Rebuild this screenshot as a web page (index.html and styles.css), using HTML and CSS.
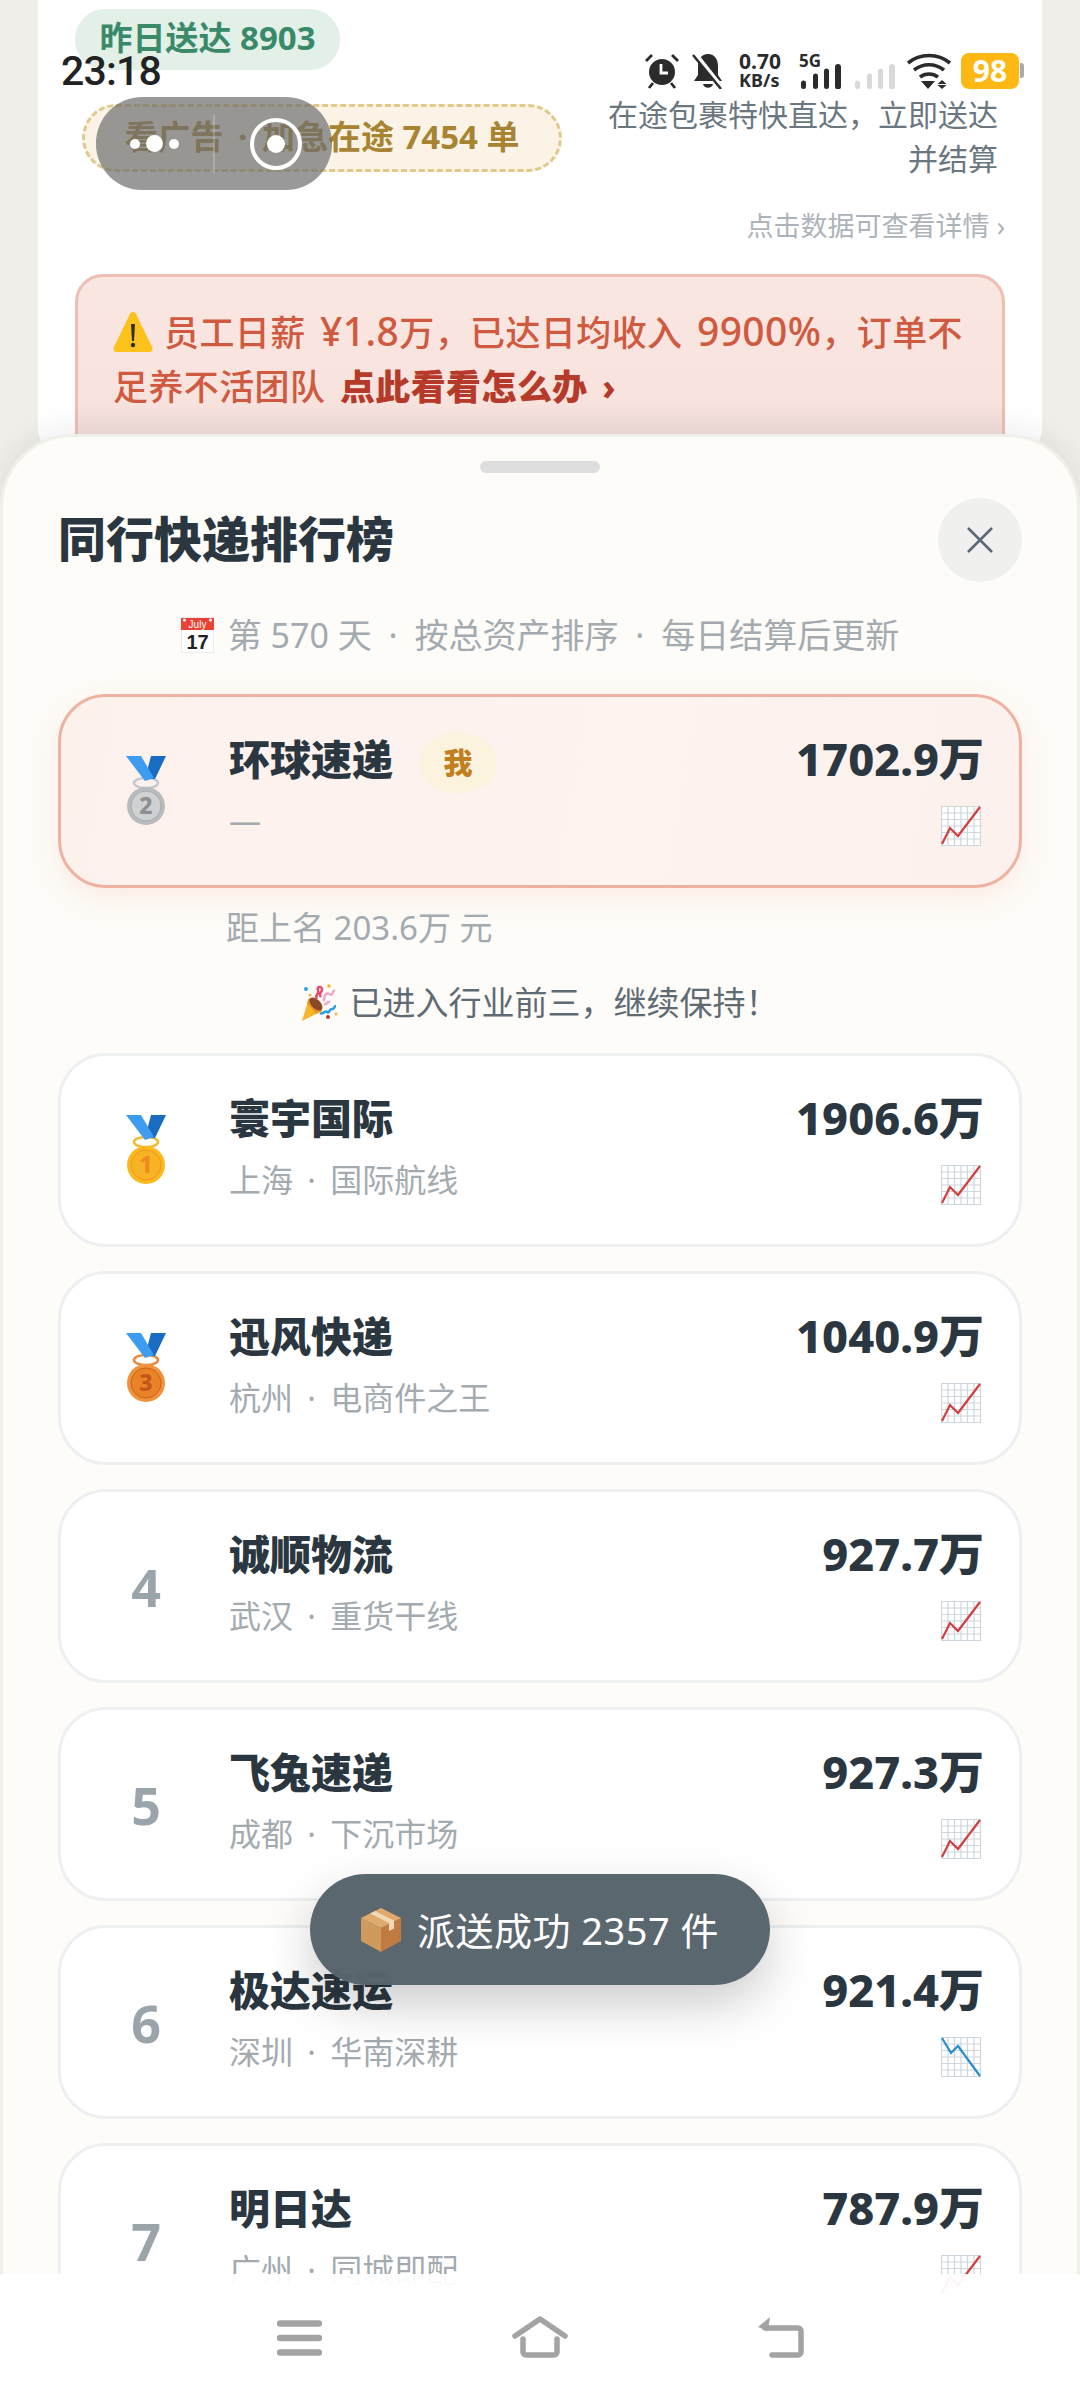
FILE: index.html
```html
<!DOCTYPE html>
<html lang="zh-CN">
  <head>
    <meta charset="UTF-8" />
    <title>同行快递排行榜</title>
    <link rel="stylesheet" href="styles.css">
  </head>
  <body>
    <svg class="defs" xmlns="http://www.w3.org/2000/svg">
      <symbol id="ribbon" viewBox="0 0 40 70">
        <path d="M25 0h15L29 23H19z" fill="#1a6cc0" />
        <path d="M0 0h15l13 22-9 3z" fill="#3d9bf0" />
      </symbol>
      <symbol id="chart-up" viewBox="0 0 40 40">
        <rect width="40" height="40" fill="#fff" />
        <path d="M.5 0v40M7 0v40M13.5 0v40M20 0v40M26.500 0v40M33 0v40M39.500 0v40M0 .5h40M0 7h40M0 13.500h40M0 20h40M0 26.500h40M0 33h40M0 39.500h40" stroke="#cdd6dc" stroke-width="1.200" fill="none" />
        <path d="M1 38l8-16 8 8L39 1" stroke="#d0403f" stroke-width="2.200" fill="none" />
      </symbol>
      <symbol id="chart-down" viewBox="0 0 40 40">
        <rect width="40" height="40" fill="#fff" />
        <path d="M.5 0v40M7 0v40M13.5 0v40M20 0v40M26.500 0v40M33 0v40M39.500 0v40M0 .5h40M0 7h40M0 13.500h40M0 20h40M0 26.500h40M0 33h40M0 39.500h40" stroke="#cdd6dc" stroke-width="1.200" fill="none" />
        <path d="M1 1l9 15 7-7 22 30" stroke="#2a8fc8" stroke-width="2.200" fill="none" />
      </symbol>
    </svg>

    <!-- page behind the sheet -->
    <div class="stats-card">
      <div class="yesterday">昨日送达 8903</div>
      <div class="stats-row">
        <div class="ad-pill">看广告 <span class="sep">·</span> 加急在途 7454 单</div>
        <div class="stats-note">在途包裹特快直达，立即送达<br />并结算</div>
      </div>
      <div class="stats-hint">点击数据可查看详情 ›</div>
      <div class="warn-banner">
        <svg class="warn-icon" viewBox="0 0 40 42">
          <path d="M20 1c2 0 3 1 4 4l15 31c1 3 0 5-3 5H4c-3 0-4-2-3-5L16 5c1-3 2-4 4-4z" fill="#fcc21b" />
          <path d="M18 13h4l-1 17h-2z" fill="#2f2f2f" />
          <circle cx="20" cy="34" r="2.200" fill="#2f2f2f" />
        </svg>员工日薪 <span class="num">¥1.8</span>万，已达日均收入 <span class="num">9900%</span>，订单不足养不活团队 <b>点此看看怎么办 ›</b>
      </div>
    </div>

    <!-- ranking sheet -->
    <section class="sheet">
      <div class="handle"></div>
      <div class="sheet-head">
        <h1>同行快递排行榜</h1>
        <div class="close">
          <svg viewBox="0 0 28 28" width="28" height="28">
            <path d="M2 2l24 24M26 2L2 26" stroke="#5a6873" stroke-width="2.500" fill="none" />
          </svg>
        </div>
      </div>
      <div class="sheet-sub">
        <svg class="calendar" viewBox="0 0 33 36">
          <rect y="1" width="33" height="35" fill="#fff" stroke="#d5d9dc" />
          <rect y="1" width="33" height="12" fill="#ea4335" />
          <circle cx="3.500" cy="3" r="1.500" fill="#fff" />
          <circle cx="29.500" cy="3" r="1.500" fill="#fff" />
          <text x="16.500" y="11" class="cal-month">July</text>
          <text x="16.500" y="32" class="cal-day">17</text>
        </svg>第 570 天 <span class="sep">·</span> 按总资产排序 <span class="sep">·</span> 每日结算后更新
      </div>

      <div class="rank-card rank-card-me">
        <div class="rank">
          <svg class="medal" viewBox="0 0 40 70">
            <ellipse cx="20" cy="27" rx="12" ry="5" fill="none" stroke="#c4c8cb" stroke-width="2.500" />
            <use href="#ribbon" />
            <circle cx="20" cy="50" r="19" fill="#b9bcbf" />
            <circle cx="20" cy="50" r="15" fill="#cfd1d3" stroke="#a8abae" />
            <text x="20" y="58" class="medal-num" fill="#8d9093">2</text>
          </svg>
        </div>
        <div class="info">
          <div class="name">环球速递<span class="me-tag">我</span></div>
          <div class="sub">—</div>
        </div>
        <div class="assets">
          <div class="value">1702.9万</div>
          <svg class="trend"><use href="#chart-up" /></svg>
        </div>
      </div>

      <div class="gap-note">距上名 203.6万 元</div>
      <div class="cheer">
        <svg class="popper" viewBox="0 0 36 38">
          <path d="M7 15l13 13L0 38z" fill="#f7b52c" />
          <path d="M7 15l13 13-6 3L5 20z" fill="#e8951c" />
          <ellipse cx="14" cy="21" rx="4.500" ry="8" transform="rotate(-45 14 21)" fill="#8a4a2a" />
          <path d="M15 16c-3-4 3-5 1-9s5-4 4 0-4 3-1 7" stroke="#e84a6a" stroke-width="2.500" fill="none" />
          <path d="M21 18c3-2 0-5 3-7s4 2 6 0 1-4 3-3M22 21c3 1 3-3 6-2" stroke="#f4a8c4" stroke-width="2.500" fill="none" />
          <path d="M18 30c3 2 5-3 7-1s3-4 5-3 2-3 4-3" stroke="#2a9fe0" stroke-width="2.500" fill="none" />
          <circle cx="4" cy="6" r="2" fill="#2a9fe0" />
          <circle cx="8" cy="12" r="1.500" fill="#f7b52c" />
          <circle cx="27" cy="3" r="1.800" fill="#f7b52c" />
          <circle cx="26" cy="34" r="2" fill="#c0392b" />
          <circle cx="34" cy="31" r="1.500" fill="#f7b52c" />
        </svg>已进入行业前三，继续保持！
      </div>

      <div class="rank-list">
        <div class="rank-card">
          <div class="rank">
            <svg class="medal" viewBox="0 0 40 70">
              <ellipse cx="20" cy="27" rx="12" ry="5" fill="none" stroke="#f5b82e" stroke-width="2.500" />
              <use href="#ribbon" />
              <circle cx="20" cy="50" r="19" fill="#fbb81f" />
              <circle cx="20" cy="50" r="15" fill="#f7b325" stroke="#ee961a" />
              <text x="20" y="58" class="medal-num" fill="#ee8a1e">1</text>
            </svg>
          </div>
          <div class="info">
            <div class="name">寰宇国际</div>
            <div class="sub">上海 <span class="sep">·</span> 国际航线</div>
          </div>
          <div class="assets">
            <div class="value">1906.6万</div>
            <svg class="trend"><use href="#chart-up" /></svg>
          </div>
        </div>
        <div class="rank-card">
          <div class="rank">
            <svg class="medal" viewBox="0 0 40 70">
              <ellipse cx="20" cy="27" rx="12" ry="5" fill="none" stroke="#e98a3a" stroke-width="2.500" />
              <use href="#ribbon" />
              <circle cx="20" cy="50" r="19" fill="#f0923a" />
              <circle cx="20" cy="50" r="15" fill="#ea8328" stroke="#c9601c" />
              <text x="20" y="58" class="medal-num" fill="#c5561a">3</text>
            </svg>
          </div>
          <div class="info">
            <div class="name">迅风快递</div>
            <div class="sub">杭州 <span class="sep">·</span> 电商件之王</div>
          </div>
          <div class="assets">
            <div class="value">1040.9万</div>
            <svg class="trend"><use href="#chart-up" /></svg>
          </div>
        </div>
        <div class="rank-card">
          <div class="rank">4</div>
          <div class="info">
            <div class="name">诚顺物流</div>
            <div class="sub">武汉 <span class="sep">·</span> 重货干线</div>
          </div>
          <div class="assets">
            <div class="value">927.7万</div>
            <svg class="trend"><use href="#chart-up" /></svg>
          </div>
        </div>
        <div class="rank-card">
          <div class="rank">5</div>
          <div class="info">
            <div class="name">飞兔速递</div>
            <div class="sub">成都 <span class="sep">·</span> 下沉市场</div>
          </div>
          <div class="assets">
            <div class="value">927.3万</div>
            <svg class="trend"><use href="#chart-up" /></svg>
          </div>
        </div>
        <div class="rank-card">
          <div class="rank">6</div>
          <div class="info">
            <div class="name">极达速运</div>
            <div class="sub">深圳 <span class="sep">·</span> 华南深耕</div>
          </div>
          <div class="assets">
            <div class="value">921.4万</div>
            <svg class="trend"><use href="#chart-down" /></svg>
          </div>
        </div>
        <div class="rank-card">
          <div class="rank">7</div>
          <div class="info">
            <div class="name">明日达</div>
            <div class="sub">广州 <span class="sep">·</span> 同城即配</div>
          </div>
          <div class="assets">
            <div class="value">787.9万</div>
            <svg class="trend"><use href="#chart-up" /></svg>
          </div>
        </div>
      </div>
    </section>

    <!-- toast -->
    <div class="toast">
      <svg class="box" viewBox="0 0 40 44">
        <path d="M0 10l20 10v24L0 33z" fill="#cf9a5e" />
        <path d="M40 10L20 20v24l20-11z" fill="#c07c40" />
        <path d="M20 0l20 10-20 10L0 10z" fill="#e0aa6c" />
        <path d="M9 5.500L14 3l19 9.500v8l-5 2.500v-8z" fill="#f0d8b4" />
      </svg>派送成功 2357 件
    </div>

    <!-- system status bar -->
    <div class="status-bar">
      <div class="clock">23:18</div>
      <div class="status-icons">
        <svg class="st-alarm" viewBox="0 0 34 36">
          <circle cx="17" cy="19" r="13" fill="#2b2b2b" />
          <path d="M16 11v9h7" stroke="#fff" stroke-width="2.800" fill="none" />
          <path d="M1 8l6-6M33 8l-6-6M4 35l4-5M30 35l-4-5" stroke="#2b2b2b" stroke-width="2.800" fill="none" />
        </svg>
        <svg class="st-bell" viewBox="0 0 32 36">
          <path d="M16 1c7 0 10 6 10 12v9l4 6H2l4-6v-9C6 7 9 1 16 1z" fill="#2b2b2b" />
          <path d="M11 31h10c-1 5-9 5-10 0z" fill="#2b2b2b" />
          <path d="M3 1l27 34" stroke="#fff" stroke-width="5" fill="none" />
          <path d="M1 2l28 34" stroke="#2b2b2b" stroke-width="2.500" fill="none" />
        </svg>
        <div class="st-speed"><span>0.70</span><span>KB/s</span></div>
        <div class="st-signal">
          <span class="st-5g">5G</span>
          <svg class="st-bars" viewBox="0 0 40 25">
            <path d="M0 19a2.500 2.500 0 0 1 5 0v3.500a2.500 2.500 0 0 1-5 0zM12 12a2.500 2.500 0 0 1 5 0v10.500a2.500 2.500 0 0 1-5 0zM23 7a2.500 2.500 0 0 1 5 0v15.500a2.500 2.500 0 0 1-5 0zM34 3a3 3 0 0 1 6 0v19.500a3 3 0 0 1-6 0z" fill="#2b2b2b" />
          </svg>
        </div>
        <svg class="st-bars st-bars-off" viewBox="0 0 40 25">
          <path d="M0 19a2.500 2.500 0 0 1 5 0v3.500a2.500 2.500 0 0 1-5 0zM12 12a2.500 2.500 0 0 1 5 0v10.500a2.500 2.500 0 0 1-5 0zM23 7a2.500 2.500 0 0 1 5 0v15.500a2.500 2.500 0 0 1-5 0zM34 3a3 3 0 0 1 6 0v19.500a3 3 0 0 1-6 0z" fill="#d9d9d9" />
        </svg>
        <svg class="st-wifi" viewBox="0 0 46 36">
          <path d="M2 10c12-10 30-10 42 0M8 17c9-7 21-7 30 0M14 24c5-4 13-4 18 0" stroke="#2b2b2b" stroke-width="3.600" fill="none" />
          <path d="M15 28h14l-7 8z" fill="#2b2b2b" />
          <path d="M36 27l4.500 4h-9zM36 36l4.500-4h-9z" fill="#2b2b2b" />
        </svg>
        <div class="battery">98</div>
      </div>
    </div>

    <!-- floating gesture pill -->
    <div class="float-pill">
      <div class="float-side">
        <span class="dot"></span><span class="dot dot-big"></span><span class="dot"></span>
      </div>
      <div class="float-line"></div>
      <div class="float-side">
        <span class="ring"><span class="ring-dot"></span></span>
      </div>
    </div>

    <!-- navigation bar -->
    <nav class="nav-bar">
      <svg class="nav-menu" viewBox="0 0 45 36">
        <path d="M3 3.500h39M3 18h39M3 32.500h39" stroke="#a3a3a3" stroke-width="6.500" stroke-linecap="round" fill="none" />
      </svg>
      <svg class="nav-home" viewBox="0 0 56 42">
        <path d="M3 20L28 3l25 17M11 23v13a3 3 0 0 0 3 3h28a3 3 0 0 0 3-3V23" stroke="#a3a3a3" stroke-width="5.500" stroke-linecap="round" stroke-linejoin="round" fill="none" />
      </svg>
      <svg class="nav-back" viewBox="0 0 48 42">
        <path d="M13 1L1 11l10 4z" fill="#a3a3a3" />
        <path d="M8 12h33a3 3 0 0 1 3 3v21a3 3 0 0 1-3 3H15" stroke="#a3a3a3" stroke-width="5.500" stroke-linecap="round" fill="none" />
      </svg>
    </nav>
  </body>
</html>
```

FILE: styles.css
```css
* {
  box-sizing: border-box;
}
body {
  background-color: #efeee8;
  color: #2b3740;
  font-family: "Noto Sans", "Noto Sans CJK SC", sans-serif;
  height: 2400px;
  margin: 0;
  overflow: hidden;
  position: relative;
  width: 1080px;
}
.defs {
  display: none;
}
.sep {
  margin: 0 6px;
}

/* page behind the sheet */
.stats-card {
  background-color: #fff;
  border-radius: 0 0 32px 32px;
  height: 460px;
  margin: 0 38px;
  padding: 9px 37px 0;
}
.yesterday {
  background-color: #e3f0e8;
  border-radius: 30px;
  color: #3a8a6a;
  font-size: 33px;
  font-weight: 700;
  height: 61px;
  line-height: 58px;
  text-align: center;
  white-space: nowrap;
  width: 265px;
}
.stats-row {
  display: flex;
  justify-content: space-between;
  margin-top: 23px;
}
.ad-pill {
  background-color: #faf3e6;
  border: 3px dashed #e0c98a;
  border-radius: 34px;
  color: #a88432;
  font-size: 33px;
  font-weight: 700;
  height: 68px;
  line-height: 60px;
  margin: 11px 0 0 7px;
  text-align: center;
  white-space: nowrap;
  width: 480px;
}
.stats-note {
  color: #6b7780;
  font-size: 30px;
  line-height: 44px;
  margin-right: 7px;
  text-align: right;
  white-space: nowrap;
}
.stats-hint {
  color: #adb4b9;
  font-size: 27px;
  line-height: 40px;
  margin-top: 25px;
  text-align: right;
}
.warn-banner {
  background: linear-gradient(#fbe7e2, #f7e2dd 70%, #ecdad8);
  border: 3px solid #efbdb2;
  border-radius: 28px;
  color: #cf5a40;
  font-size: 35px;
  font-weight: 500;
  height: 190px;
  letter-spacing: 0.4px;
  line-height: 54px;
  margin-top: 28px;
  padding: 27px 24px 0 35px;
  word-spacing: 5px;
}
.warn-banner .num {
  font-size: 39px;
}
.warn-banner b {
  color: #b53a2a;
  font-weight: 800;
}
.warn-icon {
  height: 42px;
  margin-right: 11px;
  vertical-align: -7px;
  width: 40px;
}

/* ranking sheet */
.sheet {
  background-color: #fdfcf8;
  border: 3px solid #eff0ea;
  border-bottom: 0;
  border-radius: 72px 72px 0 0;
  bottom: 0;
  box-shadow: 0 -6px 30px rgba(0, 0, 0, 0.07);
  left: 0;
  overflow: hidden;
  padding: 0 55px;
  position: absolute;
  right: 0;
  top: 434px;
}
.handle {
  background-color: #dedede;
  border-radius: 6px;
  height: 12px;
  margin: 24px auto 0;
  width: 120px;
}
.sheet-head {
  align-items: center;
  display: flex;
  height: 84px;
  justify-content: space-between;
  margin-top: 25px;
}
.sheet-head h1 {
  font-size: 48px;
  font-weight: 800;
  margin: 0 0 8px;
}
.close {
  align-items: center;
  background-color: #f0f0ee;
  border-radius: 50%;
  display: flex;
  height: 84px;
  justify-content: center;
  width: 84px;
}
.sheet-sub {
  color: #a3abb0;
  font-size: 34px;
  line-height: 48px;
  margin-top: 29px;
  text-align: center;
}
.sheet-sub .sep {
  margin: 0 8px;
}
.calendar {
  height: 36px;
  margin-right: 14px;
  vertical-align: -5px;
  width: 33px;
}
.cal-month {
  fill: #fff;
  font-family: "Liberation Sans", sans-serif;
  font-size: 10px;
  text-anchor: middle;
}
.cal-day {
  fill: #222;
  font-family: "Liberation Sans", sans-serif;
  font-size: 20px;
  font-weight: 700;
  text-anchor: middle;
}
.rank-card {
  align-items: flex-start;
  background-color: #fff;
  border: 3px solid #eeeff0;
  border-radius: 48px;
  display: flex;
  height: 194px;
  padding: 0 38px 0 44px;
}
.rank-card-me {
  background: linear-gradient(100deg, #fdf1ec, #fdf4ef 60%, #fcf1ec);
  border-color: #eeb3a0;
  box-shadow: 0 10px 30px rgba(240, 150, 120, 0.16);
  margin-top: 35px;
}
.rank {
  align-items: center;
  align-self: center;
  color: #9aa4ab;
  display: flex;
  flex: none;
  font-size: 52px;
  font-weight: 700;
  justify-content: center;
  padding-left: 2px;
  width: 80px;
}
.medal {
  height: 70px;
  width: 40px;
}
.medal-num {
  font-size: 23px;
  font-weight: 800;
  text-anchor: middle;
}
.info {
  flex: 1;
  margin-left: 44px;
  padding-top: 34px;
}
.name {
  align-items: center;
  display: flex;
  font-size: 41px;
  font-weight: 800;
  line-height: 56px;
}
.me-tag {
  align-items: center;
  background-color: #fcf3df;
  border-radius: 50%;
  color: #c08020;
  display: flex;
  font-size: 29px;
  font-weight: 800;
  height: 62px;
  justify-content: center;
  margin: -1px 0 -9px 26px;
  width: 78px;
}
.sub {
  color: #a3abb0;
  font-size: 32px;
  line-height: 44px;
  margin-top: 12px;
}
.assets {
  align-items: flex-end;
  display: flex;
  flex-direction: column;
  padding-top: 34px;
}
.value {
  font-size: 45px;
  font-weight: 800;
  line-height: 56px;
  margin-right: -3px;
}
.trend {
  height: 40px;
  margin-top: 19px;
  width: 40px;
}
.gap-note {
  color: #a3abb0;
  font-size: 33px;
  line-height: 44px;
  margin-top: 18px;
  padding-left: 168px;
}
.cheer {
  color: #5f6b74;
  font-size: 33px;
  line-height: 48px;
  margin-top: 29px;
  text-align: center;
}
.popper {
  height: 38px;
  margin-right: 12px;
  vertical-align: -6px;
  width: 36px;
}
.rank-list {
  display: flex;
  flex-direction: column;
  gap: 24px;
  margin-top: 26px;
}

/* toast */
.toast {
  align-items: center;
  background-color: rgba(88, 100, 108, 0.98);
  border-radius: 56px;
  box-shadow: 0 20px 50px rgba(0, 0, 0, 0.2);
  color: #fff;
  display: flex;
  font-size: 38px;
  height: 111px;
  justify-content: center;
  left: 310px;
  letter-spacing: 0.5px;
  line-height: 108px;
  position: absolute;
  top: 1874px;
  width: 460px;
}
.box {
  height: 44px;
  margin-right: 16px;
  width: 40px;
}

/* system status bar */
.status-bar {
  display: flex;
  justify-content: space-between;
  left: 61px;
  position: absolute;
  right: 61px;
  top: 53px;
}
.clock {
  color: #222;
  font-family: Roboto, sans-serif;
  font-size: 41px;
  font-weight: 500;
  letter-spacing: -0.8px;
  line-height: 36px;
}
.status-icons {
  align-items: flex-end;
  display: flex;
  height: 36px;
}
.st-alarm {
  height: 36px;
  width: 34px;
}
.st-bell {
  height: 36px;
  margin-left: 13px;
  width: 32px;
}
.st-speed {
  color: #2b2b2b;
  display: flex;
  flex-direction: column;
  font-weight: 700;
  height: 36px;
  margin-left: 15px;
  width: 46px;
}
.st-speed span:first-child {
  font-size: 21px;
  line-height: 21px;
  margin-top: -2px;
}
.st-speed span:last-child {
  font-size: 18px;
  line-height: 17px;
}
.st-signal {
  height: 36px;
  margin-left: 16px;
  position: relative;
  width: 40px;
}
.st-5g {
  color: #2b2b2b;
  font-size: 17px;
  font-weight: 700;
  left: -2px;
  line-height: 15px;
  position: absolute;
  top: 0;
}
.st-bars {
  bottom: 0;
  height: 25px;
  left: 0;
  position: absolute;
  width: 40px;
}
.st-bars-off {
  margin-left: 14px;
  position: static;
}
.st-wifi {
  height: 36px;
  margin-left: 11px;
  width: 46px;
}
.battery {
  background-color: #fdb813;
  border-radius: 8px;
  color: #fff;
  font-size: 30px;
  font-weight: 700;
  height: 36px;
  line-height: 36px;
  margin-left: 9px;
  position: relative;
  text-align: center;
  width: 58px;
}
.battery::after {
  background-color: #a9a9a9;
  border-radius: 0 3px 3px 0;
  content: "";
  height: 15px;
  left: 59px;
  position: absolute;
  top: 10px;
  width: 4px;
}

/* floating gesture pill */
.float-pill {
  align-items: center;
  background-color: rgba(110, 110, 110, 0.7);
  border-radius: 46px;
  display: flex;
  height: 93px;
  left: 96px;
  position: absolute;
  top: 97px;
  width: 236px;
}
.float-side {
  align-items: center;
  display: flex;
  flex: 1;
  gap: 6px;
  justify-content: center;
}
.float-line {
  background-color: rgba(255, 255, 255, 0.22);
  height: 58px;
  width: 2px;
}
.dot {
  background-color: #fff;
  border-radius: 50%;
  height: 10px;
  width: 10px;
}
.dot-big {
  height: 17px;
  width: 17px;
}
.ring {
  align-items: center;
  border: 4px solid #fff;
  border-radius: 50%;
  display: flex;
  height: 52px;
  justify-content: center;
  margin-left: 4px;
  width: 52px;
}
.ring-dot {
  background-color: #fff;
  border-radius: 50%;
  height: 18px;
  width: 18px;
}

/* navigation bar */
.nav-bar {
  align-items: flex-start;
  background-color: rgba(255, 255, 255, 0.94);
  bottom: 0;
  display: flex;
  height: 126px;
  left: 0;
  padding: 42px 0 0 277px;
  position: absolute;
  right: 0;
}
.nav-menu {
  height: 36px;
  margin-top: 4px;
  width: 45px;
}
.nav-home {
  height: 42px;
  margin-left: 190px;
  width: 56px;
}
.nav-back {
  height: 42px;
  margin-left: 189px;
  width: 48px;
}
```
